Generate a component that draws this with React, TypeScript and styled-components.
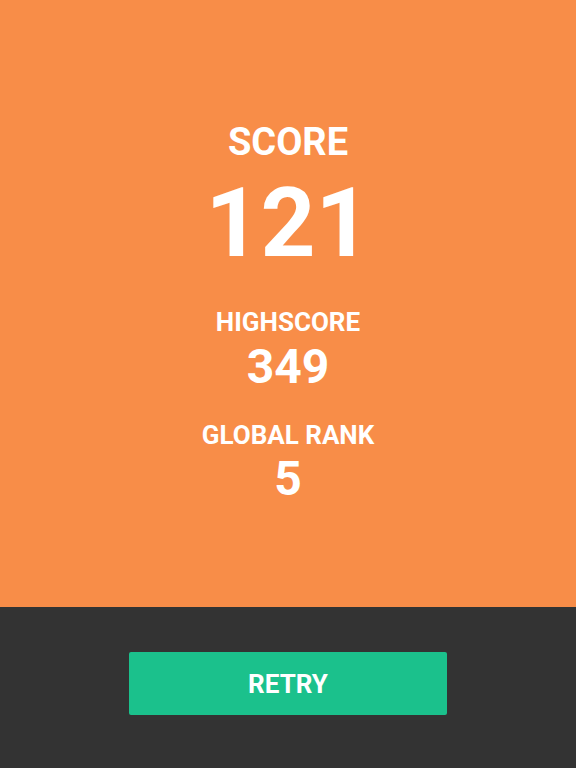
import React from 'react';
import styled, { createGlobalStyle } from 'styled-components';

const GlobalStyle = createGlobalStyle`
  html, body {
    margin: 0;
    padding: 0;
    height: 100%;
  }
  body {
    font-family: Roboto, "Liberation Sans", sans-serif;
  }
  #root {
    height: 100%;
  }
`;

const Screen = styled.div`
  display: flex;
  flex-direction: column;
  height: 100vh;
`;

const ScorePanel = styled.section`
  flex: 1;
  background: #f88d48;
  display: flex;
  flex-direction: column;
  align-items: center;
  padding-top: 123px;
  color: #ffffff;
`;

const Stat = styled.div<{ $size: number; $gap: number }>`
  font-size: ${p => p.$size}px;
  line-height: 1;
  font-weight: 700;
  margin-top: ${p => p.$gap}px;
`;

const Footer = styled.footer`
  height: 161px;
  background: #333333;
  display: flex;
  justify-content: center;
  padding-top: 45px;
  box-sizing: border-box;
`;

const RetryButton = styled.button`
  width: 318px;
  height: 63px;
  border: none;
  border-radius: 2px;
  background: #1bc18c;
  color: #ffffff;
  font-family: Roboto, "Liberation Sans", sans-serif;
  font-size: 26px;
  font-weight: 700;
  cursor: pointer;
`;

export default function App() {
  return (
    <>
      <GlobalStyle />
      <Screen>
        <ScorePanel>
          <Stat $size={38} $gap={0}>SCORE</Stat>
          <Stat $size={96} $gap={14}>121</Stat>
          <Stat $size={26} $gap={38}>HIGHSCORE</Stat>
          <Stat $size={48} $gap={8}>349</Stat>
          <Stat $size={26} $gap={31}>GLOBAL RANK</Stat>
          <Stat $size={48} $gap={7}>5</Stat>
        </ScorePanel>
        <Footer>
          <RetryButton>RETRY</RetryButton>
        </Footer>
      </Screen>
    </>
  );
}
